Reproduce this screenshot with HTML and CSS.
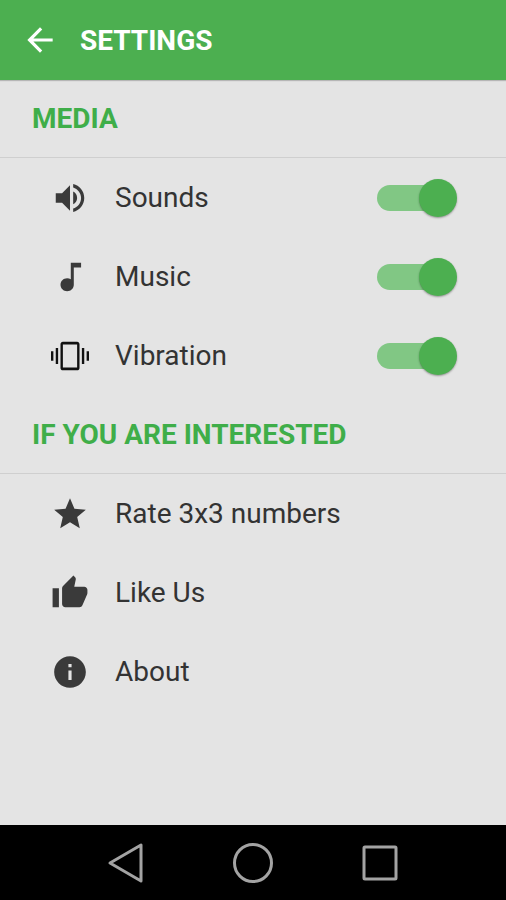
FILE: index.html
```html
<!DOCTYPE html>
<html lang="en">
  <head>
    <meta charset="UTF-8" />
    <meta name="viewport" content="width=device-width, initial-scale=1" />
    <title>Settings</title>
    <link rel="stylesheet" href="styles.css">
  </head>

  <body>
    <header class="toolbar">
      <button class="back-button" type="button" aria-label="Back">
        <svg class="icon" viewBox="0 0 24 24"><path d="M20 11H7.83l5.59-5.59L12 4l-8 8 8 8 1.41-1.41L7.83 13H20v-2z" /></svg>
      </button>
      <h1>SETTINGS</h1>
    </header>

    <main>
      <section>
        <h2>MEDIA</h2>
        <div class="row">
          <svg class="icon" viewBox="0 0 24 24"><path d="M3 9v6h4l5 5V4L7 9H3zm13.500 3c0-1.770-1.020-3.290-2.500-4.030v8.050c1.480-.730 2.500-2.250 2.500-4.020zM14 3.230v2.060c2.890.860 5 3.540 5 6.710s-2.110 5.850-5 6.710v2.060c4.010-.910 7-4.490 7-8.770s-2.990-7.860-7-8.770z" /></svg>
          <label for="sounds">Sounds</label>
          <input class="switch" id="sounds" type="checkbox" role="switch" checked />
        </div>
        <div class="row">
          <svg class="icon" viewBox="0 0 24 24"><path d="M12.500 3v10.400c-.700-.400-1.500-.600-2.300-.600-2.400 0-4.200 1.800-4.200 4.100s1.900 4.100 4.200 4.100 4.200-1.800 4.200-4.100V6H19V3h-6.500z" /></svg>
          <label for="music">Music</label>
          <input class="switch" id="music" type="checkbox" role="switch" checked />
        </div>
        <div class="row">
          <svg class="icon icon-dark" viewBox="0 0 24 24"><path d="M0 15h1.500V9H0v6zm3 2h1.500V7H3v10zm19.500-8v6H24V9h-1.500zm-3 8H21V7h-1.500v10zM16.500 3h-9C6.670 3 6 3.670 6 4.500v15c0 .830.670 1.500 1.500 1.500h9c.830 0 1.500-.670 1.500-1.500v-15c0-.830-.670-1.500-1.500-1.500zM16.500 19.200h-9V4.800h9v14.400z" /></svg>
          <label for="vibration">Vibration</label>
          <input class="switch" id="vibration" type="checkbox" role="switch" checked />
        </div>
      </section>

      <section>
        <h2>IF YOU ARE INTERESTED</h2>
        <a class="row" href="#rate">
          <svg class="icon" viewBox="0 0 24 24"><path d="M12 17.270L18.180 21l-1.640-7.030L22 9.240l-7.190-.610L12 2 9.190 8.630 2 9.240l5.460 4.730L5.820 21z" /></svg>
          <span>Rate 3x3 numbers</span>
        </a>
        <a class="row" href="#like">
          <svg class="icon" viewBox="0 0 24 24"><path d="M1 21h4V9H1v12zm22-11c0-1.100-.900-2-2-2h-6.310l.950-4.570.030-.320c0-.410-.170-.790-.440-1.060L14.170 1 7.590 7.590C7.220 7.950 7 8.450 7 9v10c0 1.100.900 2 2 2h9c.830 0 1.540-.500 1.840-1.220l3.020-7.050c.090-.230.140-.470.140-.730v-2z" /></svg>
          <span>Like Us</span>
        </a>
        <a class="row" href="#about">
          <svg class="icon" viewBox="0 0 24 24"><path d="M12 2C6.480 2 2 6.480 2 12s4.480 10 10 10 10-4.480 10-10S17.520 2 12 2zm1 15h-2v-6h2v6zm0-8h-2V7h2v2z" /></svg>
          <span>About</span>
        </a>
      </section>
    </main>

    <nav class="system-nav">
      <button type="button" aria-label="Back">
        <svg viewBox="0 0 42 42"><path d="M35 3v36L4 21z" /></svg>
      </button>
      <button type="button" aria-label="Home">
        <svg viewBox="0 0 42 42"><circle cx="21" cy="21" r="18.500" /></svg>
      </button>
      <button type="button" aria-label="Recent apps">
        <svg viewBox="0 0 42 42"><rect x="5" y="5" width="32" height="32" rx="1" /></svg>
      </button>
    </nav>
  </body>
</html>
```

FILE: styles.css
```css
* {
  box-sizing: border-box;
}

body {
  margin: 0;
  min-height: 100vh;
  display: flex;
  flex-direction: column;
  background-color: #e4e4e4;
  color: #333;
  font-family: Roboto, "Liberation Sans", sans-serif;
  font-size: 28px;
  line-height: 35px;
}

button {
  display: flex;
  align-items: center;
  justify-content: center;
  padding: 0;
  border: none;
  background: none;
  color: inherit;
}

h1,
h2 {
  margin: 0;
  font-size: 28px;
}

main {
  flex: 1;
}

.toolbar {
  display: flex;
  align-items: center;
  gap: 21px;
  height: 80px;
  padding: 0 21px;
  background-color: #4caf50;
  color: white;
  box-shadow: 0 1px 1px rgba(0, 0, 0, 0.2);
}

h2 {
  display: flex;
  align-items: center;
  height: 78px;
  padding: 0 32px;
  border-bottom: 1px solid #cfcfcf;
  color: #3fae49;
  font-weight: 700;
}

.icon {
  flex: none;
  width: 38px;
  height: 38px;
  fill: currentColor;
}

.row .icon {
  color: #3a3a3a;
}

.row .icon-dark {
  color: #111;
}

.row {
  display: flex;
  align-items: center;
  gap: 26px;
  height: 79px;
  padding: 0 49px 0 51px;
  color: inherit;
  text-decoration: none;
}

section + section {
  padding-top: 1px;
}

.row label {
  flex: 1;
}

/* track and thumb share one grid cell */
.switch {
  appearance: none;
  display: grid;
  align-items: center;
  width: 80px;
  height: 38px;
  margin: 0;
}

.switch::before,
.switch::after {
  content: "";
  grid-area: 1 / 1;
}

.switch::before {
  height: 26px;
  margin-right: 6px;
  border-radius: 13px;
  background-color: #b0b0b0;
}

.switch::after {
  width: 38px;
  height: 38px;
  border-radius: 50%;
  background-color: #f1f1f1;
  box-shadow: 0 1px 2px rgba(0, 0, 0, 0.35);
}

.switch:checked::before {
  background-color: #81c784;
}

.switch:checked::after {
  justify-self: end;
  background-color: #4caf50;
}

.system-nav {
  display: flex;
  justify-content: center;
  height: 75px;
  background-color: black;
}

.system-nav button {
  width: 25%;
}

.system-nav svg {
  width: 42px;
  height: 42px;
  fill: none;
  stroke: #a3a3a3;
  stroke-width: 3;
  stroke-linejoin: round;
}
```
